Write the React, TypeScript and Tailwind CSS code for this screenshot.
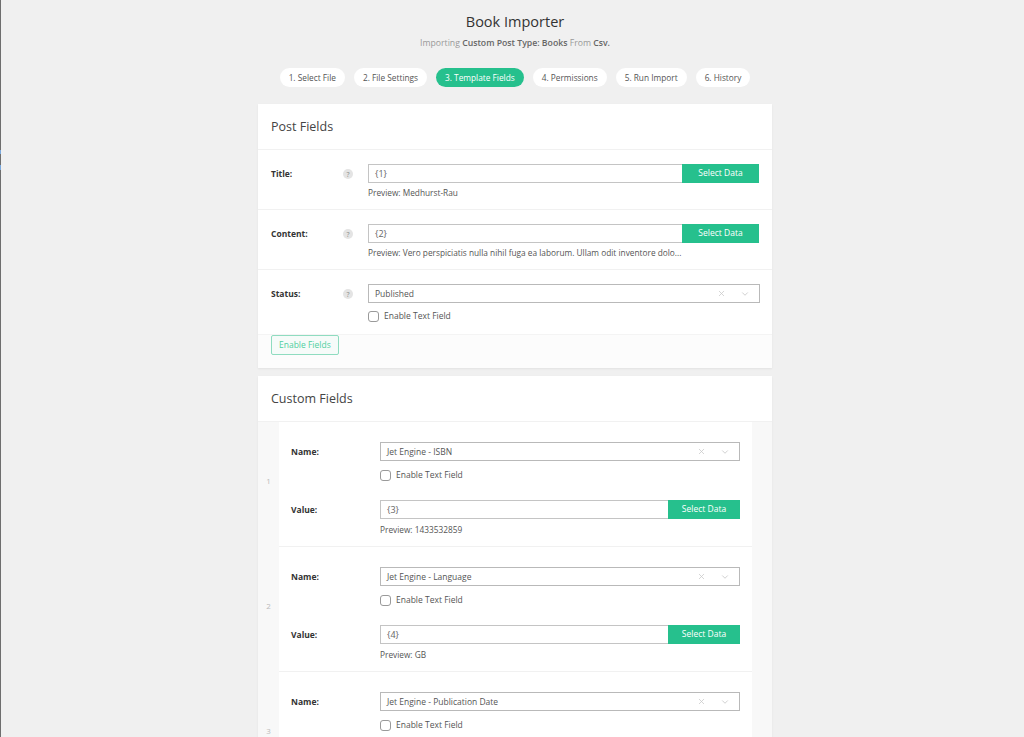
import { X, ChevronDown } from "lucide-react"

const steps = [
  "1. Select File",
  "2. File Settings",
  "3. Template Fields",
  "4. Permissions",
  "5. Run Import",
  "6. History",
]

const customFields = [
  { n: 1, name: "Jet Engine - ISBN", value: "{3}", preview: "1433532859" },
  { n: 2, name: "Jet Engine - Language", value: "{4}", preview: "GB" },
  { n: 3, name: "Jet Engine - Publication Date", value: "{5}", preview: "" },
]

function HelpIcon() {
  return (
    <span className="flex h-[10px] w-[10px] items-center justify-center rounded-full bg-[#e4e4e4] text-[7px] leading-none text-[#8a8a8a]">
      ?
    </span>
  )
}

function DataInput({ value, btn }: { value: string; btn: string }) {
  return (
    <div className="flex h-[19px]">
      <div className="flex flex-1 items-center border border-r-0 border-[#c4c4c4] bg-white px-[6px] text-[9px] text-[#666]">
        {value}
      </div>
      <button className={`${btn} flex items-center justify-center bg-[#26c08d] text-[8.5px] text-white`}>
        Select Data
      </button>
    </div>
  )
}

function SelectBox({ value }: { value: string }) {
  return (
    <div className="flex h-[19px] items-center border border-[#b9b9b9] bg-white pl-[6px] pr-[9px] text-[8.5px] text-[#555]">
      <span className="flex-1 pt-[1px]">{value}</span>
      <X className="h-[9px] w-[9px] text-[#c8c8c8]" strokeWidth={2} />
      <ChevronDown className="ml-[14px] h-[10px] w-[10px] text-[#c8c8c8]" strokeWidth={2} />
    </div>
  )
}

function Checkbox({ label }: { label: string }) {
  return (
    <label className="flex h-[12px] items-center gap-[5px] text-[8.5px] text-[#555]">
      <span className="h-[11px] w-[11px] rounded-[3px] border border-[#9a9a9a] bg-white" />
      {label}
    </label>
  )
}

export default function App() {
  return (
    <div
      className="relative min-h-screen border-l border-[#6e6e6e] bg-[#f0f0f0] pb-10 pl-[5px]"
      style={{ fontFamily: '"Open Sans", "Noto Sans", sans-serif' }}
    >
      <span className="absolute left-[-1px] top-[150px] h-[4px] w-[1px] bg-[#7aa8dc]" />
      <span className="absolute left-[-1px] top-[165px] h-[5px] w-[1px] bg-[#7aa8dc]" />

      {/* Header */}
      <div className="flex flex-col items-center pt-[12px]">
        <h1 className="text-[14.5px] leading-[20px] text-[#333]">Book Importer</h1>
        <p className="mt-[4px] text-[8.7px] leading-[14px] text-[#999]">
          Importing <span className="font-semibold text-[#666]">Custom Post Type: Books</span> From{" "}
          <span className="font-semibold text-[#666]">Csv.</span>
        </p>
        <div className="mt-[18px] flex gap-[9px]">
          {steps.map((s) => (
            <span
              key={s}
              className={`flex h-[19px] items-center rounded-full px-[9px] pt-[1px] text-[8.3px] ${
                s.startsWith("3.") ? "bg-[#26c08d] text-white" : "bg-white text-[#555]"
              }`}
            >
              {s}
            </span>
          ))}
        </div>
      </div>

      <div className="mx-auto mt-[17px] flex w-[514px] flex-col gap-[8px]">
        {/* Post Fields */}
        <div className="bg-white shadow-[0_1px_2px_rgba(0,0,0,0.06)]">
          <div className="flex h-[46px] items-center border-b border-[#f1f1f1] px-[13px] pt-[2px] text-[12.5px] text-[#444]">
            Post Fields
          </div>

          {[
            { label: "Title:", value: "{1}", preview: "Medhurst-Rau" },
            {
              label: "Content:",
              value: "{2}",
              preview: "Vero perspiciatis nulla nihil fuga ea laborum. Ullam odit inventore dolo...",
            },
          ].map((r) => (
            <div key={r.label} className="flex border-b border-[#f1f1f1] pb-[10px] pl-[13px] pr-[13px] pt-[14px]">
              <div className="flex h-[19px] w-[72px] items-center pt-[2px] text-[8.5px] font-bold text-[#333]">
                {r.label}
              </div>
              <div className="flex h-[19px] w-[25px] items-center pt-[1px]">
                <HelpIcon />
              </div>
              <div className="flex-1">
                <DataInput value={r.value} btn="w-[77px]" />
                <p className="mt-[4px] text-[8.3px] leading-[12px] text-[#555]">Preview: {r.preview}</p>
              </div>
            </div>
          ))}

          <div className="flex border-b border-[#f4f4f4] pb-[12px] pl-[13px] pr-[12px] pt-[14px]">
            <div className="flex h-[19px] w-[72px] items-center pt-[2px] text-[8.5px] font-bold text-[#333]">
              Status:
            </div>
            <div className="flex h-[19px] w-[25px] items-center pt-[1px]">
              <HelpIcon />
            </div>
            <div className="flex-1">
              <SelectBox value="Published" />
              <div className="mt-[7px]">
                <Checkbox label="Enable Text Field" />
              </div>
            </div>
          </div>

          <div className="flex bg-[#fcfcfc] pb-[13px] pl-[13px]">
            <button className="flex h-[20px] items-center rounded-[2px] border border-[#8fdcc0] bg-[#f6fbf9] px-[7px] text-[8.5px] text-[#4fcf9f]">
              Enable Fields
            </button>
          </div>
        </div>

        {/* Custom Fields */}
        <div className="bg-white shadow-[0_1px_2px_rgba(0,0,0,0.06)]">
          <div className="flex h-[46px] items-center border-b border-[#f1f1f1] px-[13px] pt-[2px] text-[12.5px] text-[#444]">
            Custom Fields
          </div>

          {customFields.map((f) => (
            <div key={f.n} className="flex">
              <div className="flex w-[21px] items-center justify-center bg-[#f8f8f8] pb-[8px] text-[8px] text-[#bbb]">
                {f.n}
              </div>
              <div className="flex-1 border-b border-[#f1f1f1] pb-[10px] pl-[12px] pr-[12px] pt-[20px]">
                <div className="flex">
                  <div className="flex h-[19px] w-[89px] items-center pt-[2px] text-[8.5px] font-bold text-[#333]">
                    Name:
                  </div>
                  <div className="flex-1">
                    <SelectBox value={f.name} />
                    <div className="mt-[8px]">
                      <Checkbox label="Enable Text Field" />
                    </div>
                  </div>
                </div>
                <div className="mt-[19px] flex">
                  <div className="flex h-[19px] w-[89px] items-center pt-[2px] text-[8.5px] font-bold text-[#333]">
                    Value:
                  </div>
                  <div className="flex-1">
                    <DataInput value={f.value} btn="w-[72px]" />
                    <p className="mt-[5px] text-[8.3px] leading-[12px] text-[#555]">Preview: {f.preview}</p>
                  </div>
                </div>
              </div>
              <div className="w-[20px] bg-[#f8f8f8]" />
            </div>
          ))}
        </div>
      </div>
    </div>
  )
}
